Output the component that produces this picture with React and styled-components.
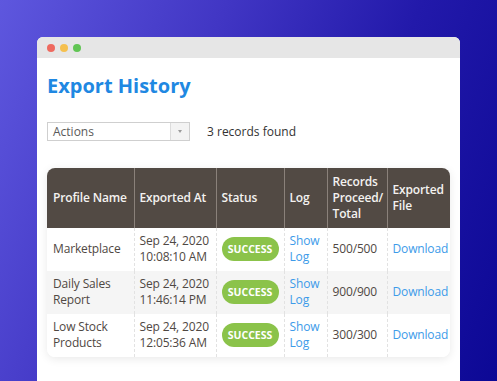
import React from "react";
import styled, { createGlobalStyle } from "styled-components";

const GlobalStyle = createGlobalStyle`
  html, body {
    margin: 0;
    padding: 0;
  }
  body {
    font-family: "Open Sans", "Liberation Sans", sans-serif;
  }
`;

const Stage = styled.div`
  width: 497px;
  height: 381px;
  overflow: hidden;
  box-sizing: border-box;
  padding: 37px 0 0 37px;
  background: linear-gradient(112deg, #5e57de 0%, #4136c4 35%, #2219aa 65%, #0c0895 100%);
`;

const Window = styled.div`
  width: 423px;
  height: 380px;
  background: #fff;
  border-radius: 6px 6px 0 0;
  overflow: hidden;
`;

const TitleBar = styled.div`
  height: 21px;
  background: #e6e6e6;
  display: flex;
  align-items: center;
  gap: 5px;
  padding-left: 10px;
`;

const Dot = styled.span`
  width: 8px;
  height: 8px;
  border-radius: 50%;
  background: ${p => p.$color};
`;

const Content = styled.div`
  padding: 14px 10px 0 10px;
`;

const Title = styled.h1`
  margin: 0;
  font-size: 20px;
  line-height: 28px;
  font-weight: 700;
  color: #1f88e2;
`;

const Toolbar = styled.div`
  margin-top: 22px;
  display: flex;
  align-items: center;
  gap: 17px;
`;

const Select = styled.div`
  width: 143px;
  height: 19px;
  box-sizing: border-box;
  border: 1px solid #cfcfcf;
  display: flex;
  font-size: 12px;
  color: #5a5a5a;
`;

const SelectLabel = styled.span`
  flex: 1;
  padding-left: 5px;
  line-height: 17px;
`;

const SelectArrow = styled.span`
  width: 18px;
  border-left: 1px solid #dcdcdc;
  background: #f3f3f3;
  display: flex;
  align-items: center;
  justify-content: center;
  &::after {
    content: "";
    border-left: 2.5px solid transparent;
    border-right: 2.5px solid transparent;
    border-top: 3px solid #9a9a9a;
  }
`;

const Count = styled.span`
  font-size: 12px;
  color: #333;
`;

const TableWrap = styled.div`
  margin-top: 27px;
  width: 403px;
  border-radius: 8px;
  overflow: hidden;
  box-shadow: 0 2px 10px rgba(0, 0, 0, 0.09);
`;

const Table = styled.table`
  width: 100%;
  border-collapse: collapse;
  table-layout: fixed;
  font-size: 12px;
  line-height: 16px;
  letter-spacing: -0.15px;
`;

const Th = styled.th`
  background: #524a44;
  color: #f4f2f0;
  font-weight: 600;
  text-align: left;
  padding: 6px 0 6px 5px;
  height: 48px;
  border-left: 1px solid #8a817a;
  &:first-child {
    border-left: none;
    padding-left: 6px;
  }
`;

const Tr = styled.tr`
  background: ${p => (p.$alt ? "#f5f5f5" : "#fff")};
`;

const Td = styled.td`
  color: #4f4843;
  padding: 5px 0 6px 5px;
  height: 32px;
  vertical-align: middle;
  border-left: 1px dashed #e2e2e2;
  white-space: ${p => (p.$nowrap ? "nowrap" : "normal")};
  &:first-child {
    border-left: none;
    padding-left: 6px;
  }
`;

const Link = styled.a`
  color: #3d9be9;
  text-decoration: none;
`;

const Badge = styled.span`
  display: inline-block;
  width: 57px;
  height: 24px;
  line-height: 24px;
  border-radius: 12px;
  background: #8bc34a;
  color: #fff;
  font-size: 10.5px;
  font-weight: 700;
  letter-spacing: 0;
  text-align: center;
`;

const rows = [
  { name: "Marketplace", date: "Sep 24, 2020", time: "10:08:10 AM", count: "500/500" },
  { name: "Daily Sales Report", date: "Sep 24, 2020", time: "11:46:14 PM", count: "900/900" },
  { name: "Low Stock Products", date: "Sep 24, 2020", time: "12:05:36 AM", count: "300/300" },
];

const widths = [87, 82, 68, 43, 60, 63];

export default function App() {
  return (
    <Stage>
      <GlobalStyle />
      <Window>
        <TitleBar>
          <Dot $color="#ee6a5f" />
          <Dot $color="#f5c04f" />
          <Dot $color="#61c554" />
        </TitleBar>
        <Content>
          <Title>Export History</Title>
          <Toolbar>
            <Select>
              <SelectLabel>Actions</SelectLabel>
              <SelectArrow />
            </Select>
            <Count>3 records found</Count>
          </Toolbar>
          <TableWrap>
            <Table>
              <colgroup>
                {widths.map((w, i) => (
                  <col key={i} style={{ width: w }} />
                ))}
              </colgroup>
              <thead>
                <tr>
                  <Th>Profile Name</Th>
                  <Th>Exported At</Th>
                  <Th>Status</Th>
                  <Th>Log</Th>
                  <Th>Records Proceed/ Total</Th>
                  <Th>Exported File</Th>
                </tr>
              </thead>
              <tbody>
                {rows.map((r, i) => (
                  <Tr key={r.name} $alt={i === 1}>
                    <Td>{r.name}</Td>
                    <Td $nowrap>
                      {r.date}
                      <br />
                      {r.time}
                    </Td>
                    <Td>
                      <Badge>SUCCESS</Badge>
                    </Td>
                    <Td>
                      <Link href="#">Show Log</Link>
                    </Td>
                    <Td>{r.count}</Td>
                    <Td $nowrap>
                      <Link href="#">Download</Link>
                    </Td>
                  </Tr>
                ))}
              </tbody>
            </Table>
          </TableWrap>
        </Content>
      </Window>
    </Stage>
  );
}
